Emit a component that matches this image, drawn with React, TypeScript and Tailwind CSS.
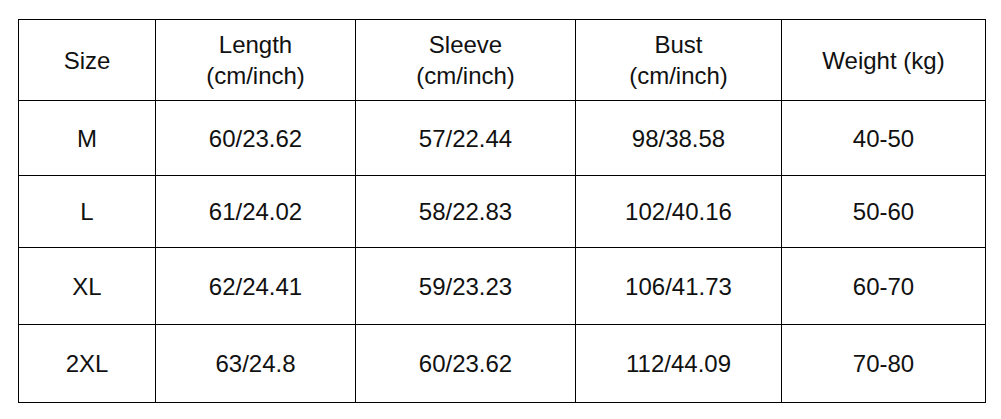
const COLS = ['w-[137px]', 'w-[200px]', 'w-[220px]', 'w-[206px]', 'w-[204px]']
const ROW_H = ['h-[81px]', 'h-[75px]', 'h-[72px]', 'h-[77px]', 'h-[78px]']

const HEADER = [
  ['Size'],
  ['Length', '(cm/inch)'],
  ['Sleeve', '(cm/inch)'],
  ['Bust', '(cm/inch)'],
  ['Weight (kg)'],
]

const ROWS = [
  ['M', '60/23.62', '57/22.44', '98/38.58', '40-50'],
  ['L', '61/24.02', '58/22.83', '102/40.16', '50-60'],
  ['XL', '62/24.41', '59/23.23', '106/41.73', '60-70'],
  ['2XL', '63/24.8', '60/23.62', '112/44.09', '70-80'],
]

export default function App() {
  return (
    <div className="w-[1001px] h-[419px] bg-white pt-[19px] pl-[18px] text-[24px] leading-[31px] text-[#111]" style={{ fontFamily: '"Liberation Sans", Arial, sans-serif' }}>
      <div className="inline-flex flex-col border-l border-t border-black">
        <div className={`flex ${ROW_H[0]}`}>
          {HEADER.map((lines, i) => (
            <div key={i} className={`${COLS[i]} border-r border-b border-black flex flex-col items-center justify-center text-center`}>
              {lines.map((l) => (
                <span key={l}>{l}</span>
              ))}
            </div>
          ))}
        </div>
        {ROWS.map((row, r) => (
          <div key={r} className={`flex ${ROW_H[r + 1]}`}>
            {row.map((cell, i) => (
              <div key={i} className={`${COLS[i]} border-r border-b border-black flex items-center justify-center`}>
                {cell}
              </div>
            ))}
          </div>
        ))}
      </div>
    </div>
  )
}
